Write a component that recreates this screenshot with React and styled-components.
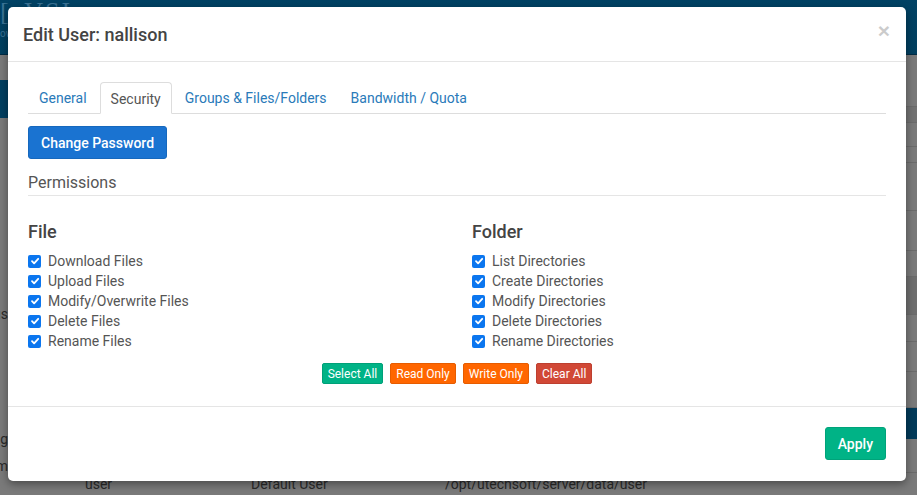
import React from "react";
import styled, { createGlobalStyle } from "styled-components";

const Global = createGlobalStyle`
  html, body { margin: 0; padding: 0; }
  body { font-family: Roboto, "Liberation Sans", Arial, sans-serif; width: 917px; height: 495px; overflow: hidden; background: #787878; }
  * { box-sizing: border-box; }
`;

/* ---------- dimmed page behind the modal ---------- */
const Page = styled.div`
  position: relative;
  width: 917px;
  height: 495px;
  background: #7a7a7a;
  overflow: hidden;
  display: flex;
  flex-direction: column;
`;
const TopBar = styled.div`
  height: 55px;
  flex: none;
  background: linear-gradient(#014264, #013f5f);
  border-bottom: 1px solid #012c44;
  display: flex;
  flex-direction: column;
  padding-left: 0;
`;
const Logo = styled.div`
  font-family: "Liberation Serif", serif;
  font-size: 26px;
  line-height: 24px;
  color: #3a7294;
  letter-spacing: 2px;
`;
const LogoSub = styled.div`
  font-size: 10px;
  line-height: 12px;
  color: #3a7294;
  margin-top: 4px;
`;
const PageBody = styled.div`
  flex: 1;
  display: grid;
  grid-template-columns: 8px 1fr;
`;
const SideNav = styled.div`
  display: flex;
  flex-direction: column;
  overflow: hidden;
`;
const SideBlock = styled.div`
  height: ${(p) => p.$h}px;
  flex: none;
  background: ${(p) => (p.$active ? "#023f60" : "transparent")};
`;
const SideText = styled.div`
  margin-top: ${(p) => p.$mt}px;
  height: 16px;
  line-height: 16px;
  font-size: 14px;
  color: #2a2a2a;
  display: flex;
  justify-content: flex-end;
  white-space: nowrap;
`;
const Table = styled.div`
  display: flex;
  flex-direction: column;
`;
const TRow = styled.div`
  height: ${(p) => p.$h}px;
  flex: none;
  border-bottom: 1px solid ${(p) => (p.$noline ? "transparent" : "#6b6b6b")};
  background: ${(p) => p.$bg || "transparent"};
  display: flex;
  align-items: center;
  font-size: 14px;
  color: #2a2a2a;
`;
const Cell = styled.span`
  width: ${(p) => p.$w}px;
  flex: none;
  font-style: ${(p) => (p.$it ? "italic" : "normal")};
`;

/* ---------- modal ---------- */
const Modal = styled.div`
  position: absolute;
  left: 8px;
  top: 7px;
  width: 898px;
  height: 474px;
  background: #fff;
  border-radius: 5px;
  box-shadow: 0 3px 9px rgba(0, 0, 0, 0.4);
  display: flex;
  flex-direction: column;
`;
const Header = styled.div`
  height: 55px;
  flex: none;
  border-bottom: 1px solid #e5e5e5;
  display: flex;
  align-items: center;
  justify-content: space-between;
  padding: 0 16px 0 15px;
`;
const Title = styled.h4`
  margin: 0;
  font-size: 18px;
  font-weight: 500;
  color: #444;
  padding-top: 1px;
`;
const Close = styled.button`
  border: 0;
  background: none;
  padding: 0;
  font-family: "Liberation Sans", Arial, sans-serif;
  font-size: 21px;
  font-weight: 700;
  line-height: 1;
  color: #000;
  opacity: 0.2;
  margin-top: -8px;
`;
const Body = styled.div`
  flex: 1;
  padding: 20px 20px 0;
  display: flex;
  flex-direction: column;
`;
const Tabs = styled.div`
  display: flex;
  height: 32px;
  border-bottom: 1px solid #ddd;
`;
const Tab = styled.div`
  padding: 1px 10px 0;
  margin-right: 2px;
  height: ${(p) => (p.$active ? 32 : 31)}px;
  display: flex;
  align-items: center;
  font-size: 14px;
  color: ${(p) => (p.$active ? "#555" : "#2a7ab9")};
  background: #fff;
  border: 1px solid ${(p) => (p.$active ? "#ddd" : "transparent")};
  border-bottom-color: ${(p) => (p.$active ? "#fff" : "transparent")};
  border-radius: 4px 4px 0 0;
`;
const ActionButton = styled.button`
  align-self: flex-start;
  margin-top: ${(p) => p.$mt || 0}px;
  height: 33px;
  padding: 0 12px;
  border: 1px solid ${(p) => p.$border};
  border-radius: 3px;
  background: ${(p) => p.$bg};
  color: #fff;
  font-family: Roboto, "Liberation Sans", sans-serif;
  font-size: 14px;
  font-weight: 500;
`;
const Legend = styled.div`
  margin-top: 13px;
  font-size: 16px;
  line-height: 22px;
  color: #555;
  padding-bottom: 1px;
  border-bottom: 1px solid #e5e5e5;
`;
const Columns = styled.div`
  margin-top: 25px;
  display: grid;
  grid-template-columns: 1fr 1fr;
  column-gap: 30px;
`;
const Column = styled.div`
  display: flex;
  flex-direction: column;
`;
const ColTitle = styled.h4`
  margin: 0 0 8px;
  font-size: 18px;
  line-height: 22px;
  font-weight: 500;
  color: #444;
`;
const CheckRow = styled.label`
  display: flex;
  align-items: center;
  gap: 7px;
  height: 20px;
  font-size: 14px;
  color: #555;
`;
const Box = styled.span`
  width: 13px;
  height: 13px;
  border-radius: 2px;
  background: #0b76ef;
  display: flex;
  align-items: center;
  justify-content: center;
  flex: none;
`;
const SmallButtons = styled.div`
  margin-top: 12px;
  display: flex;
  justify-content: center;
  gap: 7px;
`;
const SmallButton = styled.button`
  height: 21px;
  padding: 0 5px;
  border: 1px solid ${(p) => p.$border};
  border-radius: 2px;
  background: ${(p) => p.$bg};
  color: #fff;
  font-family: Roboto, "Liberation Sans", sans-serif;
  font-size: 12px;
  line-height: 1;
`;
const Footer = styled.div`
  flex: none;
  border-top: 1px solid #e5e5e5;
  padding: 20px 20px 21px;
  display: flex;
  justify-content: flex-end;
`;

const Check = () => (
  <Box>
    <svg width="10" height="10" viewBox="0 0 10 10">
      <path d="M2 5.2 L4.1 7.3 L8.2 2.8" fill="none" stroke="#fff" strokeWidth="1.8" strokeLinecap="round" strokeLinejoin="round" />
    </svg>
  </Box>
);

const fileItems = ["Download Files", "Upload Files", "Modify/Overwrite Files", "Delete Files", "Rename Files"];
const folderItems = ["List Directories", "Create Directories", "Modify Directories", "Delete Directories", "Rename Directories"];

export default function App() {
  return (
    <>
      <Global />
      <Page>
        <TopBar>
          <Logo>[aVSI</Logo>
          <LogoSub>ow</LogoSub>
        </TopBar>
        <PageBody>
          <SideNav>
            <SideBlock $h={25} />
            <SideBlock $h={38} $active />
            <SideText $mt={188}>Status</SideText>
            <SideText $mt={109}>Config</SideText>
            <SideText $mt={11}>Item</SideText>
          </SideNav>
          <Table>
            <TRow $h={52} />
            <TRow $h={16} $bg="#727272" />
            <TRow $h={24} />
            <TRow $h={16} />
            <TRow $h={48} />
            <TRow $h={40} />
            <TRow $h={26} />
            <TRow $h={38} $bg="#6e6e6e">
              <Cell $w={876} />
              <Cell $w={20} $it>ab</Cell>
            </TRow>
            <TRow $h={27} />
            <TRow $h={30} />
            <TRow $h={36} />
            <TRow $h={31} $bg="#023a59" $noline />
            <TRow $h={34} />
            <TRow $h={22} $noline>
              <Cell $w={77} />
              <Cell $w={166}>user</Cell>
              <Cell $w={194}>Default User</Cell>
              <Cell $w={300}>/opt/utechsoft/server/data/user</Cell>
            </TRow>
          </Table>
        </PageBody>

        <Modal>
          <Header>
            <Title>Edit User: nallison</Title>
            <Close>×</Close>
          </Header>
          <Body>
            <Tabs>
              <Tab>General</Tab>
              <Tab $active>Security</Tab>
              <Tab>Groups &amp; Files/Folders</Tab>
              <Tab>Bandwidth / Quota</Tab>
            </Tabs>
            <ActionButton $mt={12} $bg="#1a73d1" $border="#1668bd">Change Password</ActionButton>
            <Legend>Permissions</Legend>
            <Columns>
              <Column>
                <ColTitle>File</ColTitle>
                {fileItems.map((t) => (
                  <CheckRow key={t}>
                    <Check />
                    {t}
                  </CheckRow>
                ))}
              </Column>
              <Column>
                <ColTitle>Folder</ColTitle>
                {folderItems.map((t) => (
                  <CheckRow key={t}>
                    <Check />
                    {t}
                  </CheckRow>
                ))}
              </Column>
            </Columns>
            <SmallButtons>
              <SmallButton $bg="#00b386" $border="#00a078">Select All</SmallButton>
              <SmallButton $bg="#ff6600" $border="#e65c00">Read Only</SmallButton>
              <SmallButton $bg="#ff6600" $border="#e65c00">Write Only</SmallButton>
              <SmallButton $bg="#d14836" $border="#bd3f2f">Clear All</SmallButton>
            </SmallButtons>
          </Body>
          <Footer>
            <ActionButton $bg="#00b386" $border="#00a37a">Apply</ActionButton>
          </Footer>
        </Modal>
      </Page>
    </>
  );
}
